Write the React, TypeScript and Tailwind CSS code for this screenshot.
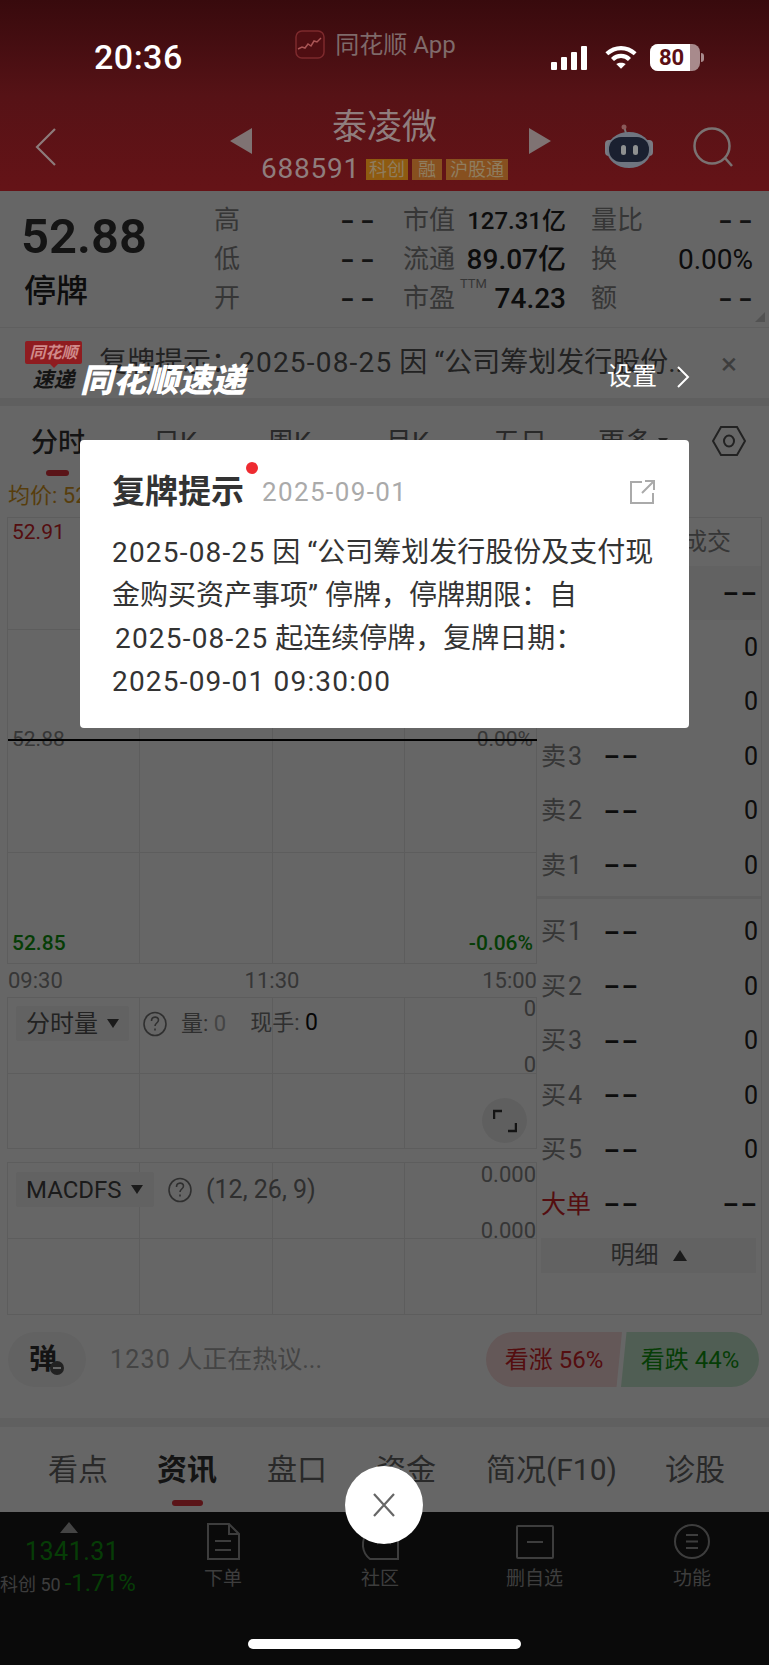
const FONT = { fontFamily: '"Roboto", "Noto Sans CJK SC", sans-serif' };

const Triangle = ({ dir, className }: { dir: "left" | "right"; className?: string }) => (
  <svg width="22" height="26" viewBox="0 0 22 26" className={className}>
    <path d={dir === "left" ? "M22 0V26L0 13Z" : "M0 0V26L22 13Z"} fill="#7f7373" />
  </svg>
);

const Question = () => (
  <svg width="24" height="26" viewBox="0 0 24 26" fill="none" stroke="#777" strokeWidth="1.6">
    <ellipse cx="12" cy="13" rx="11" ry="11.5" />
    <path d="M8.5 10c0-5 7-5 7-1 0 3-3.500 3-3.500 6M12 17.500v2" />
  </svg>
);

const Caret = () => <span className="ml-[9px] h-0 w-0 border-x-[6px] border-t-[9px] border-x-transparent border-t-[#444]" />;

// the app's "--" placeholder is much wider than a plain hyphen
const Dash = ({ className }: { className: string }) => <span className={`inline-block font-bold ${className}`}>--</span>;

// digits in the popup run a bit wider than Roboto
const Num = ({ children }: { children: React.ReactNode }) => <span className="tracking-[1.2px]">{children}</span>;

// chart background, 4 columns and `rows` rows of thin lines
const ChartGrid = ({ rows, className, children }: { rows: number; className: string; children?: React.ReactNode }) => (
  <div className={`relative grid grid-cols-4 border-l border-t border-[#e8e8e8] ${className}`}>
    {Array.from({ length: rows * 4 }).map((_, i) => (
      <div key={i} className="border-b border-r border-[#e8e8e8]" />
    ))}
    {children}
  </div>
);

const InfoCell = ({ label, value, size = "text-[28px]", pr }: { label: React.ReactNode; value?: string; size?: string; pr?: string }) => (
  <div className={`flex h-[39px] items-center justify-between ${pr ?? ""}`}>
    <span className="text-[26px] text-[#888]">{label}</span>
    {value ? (
      <span className={`text-[#222] ${size}`}>{value}</span>
    ) : (
      <Dash className="-mr-[5px] origin-right scale-x-[1.6] text-[24px] tracking-[3px] text-[#333]" />
    )}
  </div>
);

const QuoteRow = ({ label, last = "0", red }: { label: string; last?: string; red?: boolean }) => (
  <div className="flex h-[54.5px] items-center">
    <span className={`w-[62px] ${red ? "text-[25px] text-[#d2232a]" : "text-[25px] tracking-[2px] text-[#888]"}`}>{label}</span>
    <span className="flex-1">
      <Dash className="origin-left scale-x-[1.9] text-[24px] text-[#222]" />
    </span>
    {last === "--" ? <Dash className="origin-right scale-x-[1.9] text-[24px] text-[#222]" /> : <span className="text-[25px] text-[#222]">{last}</span>}
  </div>
);

const BottomItem = ({ icon, label, className }: { icon: React.ReactNode; label: string; className: string }) => (
  <div className={`flex flex-col items-center pt-[10px] ${className}`}>
    <div className="flex h-[39px] items-center">{icon}</div>
    <span className="mt-[3px] whitespace-nowrap text-[19px] leading-[30px] text-[#9a9a9a]">{label}</span>
  </div>
);

const App = () => {
  return (
    <div className="relative h-[1665px] w-[769px] overflow-hidden bg-white" style={FONT}>
      {/* header */}
      <header className="relative h-[191px] bg-gradient-to-b from-[#380a0d] via-[#561216] to-[#651317]">
        <div className="absolute left-[94px] top-[37px] text-[34px] font-medium leading-[40px] tracking-[0.5px] text-white">20:36</div>
        <div className="flex justify-center pr-[18px] pt-[30px]">
          <div className="flex items-center gap-[10px]">
            <svg width="30" height="29" viewBox="0 0 30 29" fill="none">
              <rect x="1" y="1" width="28" height="27" rx="6" fill="#4f0e12" stroke="#7d2a2d" strokeWidth="1.500" />
              <path d="M3 19l4-2 3 1 3-4 3 2 3-5 3 1 4-4" stroke="#a55" strokeWidth="1.500" />
            </svg>
            <span className="text-[24px] leading-[28px] text-[#7f6a6a]">同花顺 App</span>
          </div>
        </div>
        {/* status icons */}
        <div className="absolute left-[551px] top-[44px] flex items-center">
          <svg width="38" height="24" viewBox="0 0 38 24" fill="white">
            <rect x="0" y="16" width="6" height="8" rx="1" />
            <rect x="10" y="11" width="6" height="13" rx="1" />
            <rect x="20" y="6" width="6" height="18" rx="1" />
            <rect x="30" y="0" width="6" height="24" rx="1" />
          </svg>
          <svg className="ml-[15px]" width="34" height="25" viewBox="0 0 36 26" fill="none" stroke="white" strokeWidth="4.500">
            <path d="M3 9c9-8 21-8 30 0" />
            <path d="M9 15c5-5 13-5 18 0" />
            <path d="M18 25l-5-5c3-2 7-2 10 0z" fill="white" stroke="none" />
          </svg>
          <div className="relative ml-[12px] flex h-[27px] w-[50px] items-center overflow-hidden rounded-[8px] bg-[#a88a8c]">
            <div className="absolute inset-y-0 left-0 w-[40px] bg-white" />
            <span className="relative pl-[9px] text-[22px] font-bold leading-[27px] text-[#5b1015]">80</span>
          </div>
          <div className="ml-[1px] h-[9px] w-[3px] rounded-r bg-[#a88a8c]" />
        </div>

        <svg className="absolute left-[34px] top-[127px]" width="24" height="40" viewBox="0 0 24 40" fill="none" stroke="#8d7b7b" strokeWidth="2.200">
          <path d="M21 2L3 20l18 18" />
        </svg>
        <div className="mt-[44px] flex flex-col items-center">
          <div className="text-[35px] leading-[50px] text-[#8f7d7d]">泰凌微</div>
          <div className="relative mt-[2px] flex items-center">
            <Triangle dir="left" className="absolute -left-[31px] -top-[27px]" />
            <Triangle dir="right" className="absolute -right-[43px] -top-[27px]" />
            <span className="text-[28px] leading-[28px] tracking-[0.8px] text-[#8f7d7d]">688591</span>
            <div className="ml-[6px] flex gap-[4px] text-[18px] leading-[21px] text-[#8f7d5f]">
              <span className="bg-[#8e5a10] px-[3px]">科创</span>
              <span className="bg-[#87501f] px-[6px]">融</span>
              <span className="bg-[#87501f] px-[4px]">沪股通</span>
            </div>
          </div>
        </div>
        <svg className="absolute left-[604px] top-[124px]" width="50" height="45" viewBox="0 0 50 45">
          <path d="M22 9c-1-3-2-5-1-6" stroke="#777" strokeWidth="2" fill="none" />
          <circle cx="20" cy="3" r="2.500" fill="#8a5a5a" />
          <rect x="1" y="16" width="48" height="16" rx="4" fill="#7a7a82" />
          <ellipse cx="25" cy="26" rx="22" ry="18" fill="#6f7580" />
          <rect x="5" y="13" width="40" height="25" rx="12" fill="#1a2030" />
          <rect x="17" y="21" width="5" height="10" rx="2.500" fill="#8e9090" />
          <rect x="29" y="21" width="5" height="10" rx="2.500" fill="#8e9090" />
        </svg>
        <svg className="absolute left-[693px] top-[127px]" width="42" height="41" viewBox="0 0 42 41" fill="none" stroke="#7a7272" strokeWidth="2.500">
          <circle cx="19" cy="19" r="17.500" />
          <path d="M32 31l7 8" />
        </svg>
      </header>

      {/* quote summary */}
      <section className="relative flex h-[137px] border-b border-[#eee] pt-[10px]">
        <div className="w-[214px] pl-[21px]">
          <div className="mt-[7px] text-[49px] font-semibold leading-[58px] text-[#333]">52.88</div>
          <div className="ml-[3px] mt-[5px] text-[32px] font-medium leading-[40px] text-[#222]">停牌</div>
        </div>
        <div className="grid h-[117px] w-[540px] grid-cols-[189px_188px_162px]">
          <InfoCell label="高" pr="pr-[28px]" />
          <InfoCell label="市值" value="127.31亿" size="text-[24px] font-medium" pr="pr-[25px]" />
          <InfoCell label="量比" />
          <InfoCell label="低" pr="pr-[28px]" />
          <InfoCell label="流通" value="89.07亿" size="text-[28px] font-medium" pr="pr-[25px]" />
          <InfoCell label="换" value="0.00%" />
          <InfoCell label="开" pr="pr-[28px]" />
          <InfoCell
            label={
              <span className="relative">
                市盈
                <span className="absolute -top-[9px] left-[57px] text-[13px] text-[#888]">TTM</span>
              </span>
            }
            value="74.23"
            size="text-[28px] font-medium"
            pr="pr-[25px]"
          />
          <InfoCell label="额" />
        </div>
        <span className="absolute bottom-[5px] right-[4px] h-0 w-0 border-b-[10px] border-l-[10px] border-b-[#ccc] border-l-transparent" />
      </section>

      {/* notice */}
      <div className="flex h-[70px] items-center pl-[99px]">
        <span className="w-[622px] whitespace-nowrap text-[28px] text-[#555]">
          复牌提示：<Num>2025-08-25</Num> 因 “公司筹划发行股份..
        </span>
        <span className="text-[30px] text-[#999]">×</span>
      </div>
      <div className="h-[8px] bg-[#eee]" />

      {/* period tabs */}
      <nav className="relative flex h-[70px] items-center pt-[4px] text-[27px] text-[#666]">
        <span className="absolute left-[31px] font-medium text-[#333]">分时</span>
        <span className="absolute left-[46px] top-[64px] h-[6px] w-[23px] rounded bg-[#e0333c]" />
        <span className="absolute left-[153px]">日K</span>
        <span className="absolute left-[267px]">周K</span>
        <span className="absolute left-[385px]">月K</span>
        <span className="absolute left-[493px]">五日</span>
        <span className="absolute left-[598px]">更多</span>
        <span className="absolute left-[658px] top-[32px] h-0 w-0 border-x-[5px] border-t-[6px] border-x-transparent border-t-[#555]" />
        <svg className="absolute left-[712px] top-[19px]" width="34" height="32" viewBox="0 0 34 32" fill="none" stroke="#555" strokeWidth="2">
          <path d="M9 2h16l8 14-8 14H9L1 16z" />
          <ellipse cx="17" cy="16" rx="5" ry="5.500" />
        </svg>
      </nav>

      <div className="h-[41px] pl-[8px] pt-[3px] text-[22px] leading-[34px] text-[#d99a1e]">均价: 52.88</div>

      {/* charts and order book */}
      <div className="flex h-[798px] pl-[7px]">
        <div className="w-[530px]">
          <ChartGrid rows={4} className="h-[447px] grid-rows-4">
            <span className="absolute left-[4px] top-[1px] text-[21px] leading-[26px] text-[#d2232a]">52.91</span>
            <span className="absolute left-[4px] top-[208px] text-[21px] leading-[26px] text-[#888]">52.88</span>
            <span className="absolute right-[4px] top-[208px] text-[21px] leading-[26px] text-[#888]">0.00%</span>
            <span className="absolute inset-x-0 top-[221px] h-[2px] bg-black" />
            <span className="absolute left-[4px] top-[412px] text-[21px] font-medium leading-[26px] text-[#119911]">52.85</span>
            <span className="absolute right-[4px] top-[412px] text-[21px] font-medium leading-[26px] text-[#119911]">-0.06%</span>
          </ChartGrid>
          <div className="flex h-[33px] items-center justify-between pl-[1px] text-[22px] text-[#888]">
            <span>09:30</span>
            <span className="pr-[1px]">11:30</span>
            <span>15:00</span>
          </div>
          <ChartGrid rows={2} className="h-[152px] grid-rows-2">
            <div className="absolute left-[8px] top-[8px] flex items-center">
              <div className="flex h-[35px] w-[113px] items-center rounded-[2px] bg-[#f5f5f5] pl-[10px] text-[24px] text-[#555]">
                分时量
                <Caret />
              </div>
              <div className="ml-[14px]">
                <Question />
              </div>
              <span className="ml-[14px] text-[22px] text-[#777]">
                量: <span className="text-[#aaa]">0</span>
              </span>
              <span className="ml-[24px] text-[22px] text-[#777]">
                现手: <span className="text-[23px] text-[#111]">0</span>
              </span>
            </div>
            <span className="absolute right-[1px] top-[-2px] text-[22px] leading-[26px] text-[#888]">0</span>
            <span className="absolute right-[1px] top-[54px] text-[22px] leading-[26px] text-[#888]">0</span>
            <div className="absolute left-[474px] top-[100px] flex h-[45px] w-[45px] items-center justify-center rounded-full bg-[#eee]">
              <svg width="24" height="24" viewBox="0 0 24 24" fill="none" stroke="#333" strokeWidth="2.500">
                <path d="M1 10V2h8M23 14v8h-8" />
              </svg>
            </div>
          </ChartGrid>
          <ChartGrid rows={2} className="mt-[13px] h-[153px] grid-rows-2">
            <div className="absolute left-[8px] top-[8px] flex items-center">
              <div className="flex h-[35px] w-[138px] items-center rounded-[2px] bg-[#f5f5f5] pl-[10px] text-[24px] text-[#444]">
                MACDFS
                <Caret />
              </div>
              <div className="ml-[14px]">
                <Question />
              </div>
              <span className="ml-[14px] text-[25px] text-[#777]">(12, 26, 9)</span>
            </div>
            <span className="absolute right-[1px] top-[-1px] text-[22px] leading-[26px] text-[#888]">0.000</span>
            <span className="absolute right-[1px] top-[55px] text-[22px] leading-[26px] text-[#888]">0.000</span>
          </ChartGrid>
        </div>

        <div className="w-[225px] border-b border-r border-t border-[#e8e8e8] pl-[4px] pr-[3px]">
          <div className="flex h-[48px] items-center justify-end pr-[27px] text-[24px] text-[#888]">成交</div>
          <div className="-ml-[4px] -mr-[3px] flex h-[54px] items-center justify-end bg-[#f5f5f5] pr-[3px] text-[#222]">
            <Dash className="origin-right scale-x-[1.9] text-[24px]" />
          </div>
          <QuoteRow label="卖5" />
          <QuoteRow label="卖4" />
          <QuoteRow label="卖3" />
          <QuoteRow label="卖2" />
          <QuoteRow label="卖1" />
          <div className="-ml-[4px] -mr-[3px] mb-[6px] mt-[3px] h-[3px] bg-[#eee]" />
          <QuoteRow label="买1" />
          <QuoteRow label="买2" />
          <QuoteRow label="买3" />
          <QuoteRow label="买4" />
          <QuoteRow label="买5" />
          <QuoteRow label="大单" last="--" red />
          <div className="mr-[2px] mt-[6px] flex h-[35px] items-center justify-center gap-[14px] bg-[#f5f5f5] text-[24px] text-[#666]">
            明细
            <span className="h-0 w-0 border-x-[7px] border-b-[11px] border-x-transparent border-b-[#444]" />
          </div>
        </div>
      </div>

      {/* comment bar */}
      <div className="flex h-[103px] items-start pl-[8px] pt-[17px]">
        <div className="relative flex h-[55px] w-[78px] items-center justify-center rounded-full bg-[#f5f5f5] text-[28px] font-bold text-[#333]">
          <span className="-ml-[8px]">弹</span>
          <span className="absolute left-[42px] top-[29px] flex h-[14px] w-[14px] items-center justify-center rounded-full bg-[#555]">
            <span className="h-[2px] w-[8px] bg-white" />
          </span>
        </div>
        <span className="ml-[24px] w-[376px] text-[25px] leading-[55px] text-[#aaa]">
          <Num>1230</Num> 人正在热议...
        </span>
        <div className="flex h-[55px] w-[136px] items-center justify-center rounded-l-[28px] bg-[#fbdcdc] text-[24px] text-[#d2232a] [clip-path:polygon(0_0,100%_0,96%_100%,0_100%)]">看涨 56%</div>
        <div className="-ml-[1px] flex h-[55px] w-[138px] items-center justify-center rounded-r-[28px] bg-[#c9ecd2] text-[24px] text-[#119911] [clip-path:polygon(4%_0,100%_0,100%_100%,0_100%)]">看跌 44%</div>
      </div>
      <div className="h-[9px] bg-[#f0f0f0]" />

      {/* info tabs */}
      <nav className="relative flex h-[85px] items-center text-[30px] text-[#666]">
        <span className="absolute left-[48px]">看点</span>
        <span className="absolute left-[157px] font-bold text-[#333]">资讯</span>
        <span className="absolute left-[172px] top-[73px] h-[6px] w-[31px] rounded bg-[#e0333c]" />
        <span className="absolute left-[267px]">盘口</span>
        <span className="absolute left-[376px]">资金</span>
        <span className="absolute left-[486px]">简况(F10)</span>
        <span className="absolute left-[665px]">诊股</span>
      </nav>

      {/* bottom bar */}
      <footer className="flex h-[153px] items-start bg-[#1a1a1a]">
        <div className="relative w-[170px]">
          <div className="absolute left-[60px] top-[10px] h-0 w-0 border-x-[9px] border-b-[11px] border-x-transparent border-b-[#aaa]" />
          <div className="absolute left-[25px] top-[23px] text-[25px] leading-[34px] tracking-[0.5px] text-[#119911]">1341.31</div>
          <div className="absolute left-0 top-[57px] flex w-[170px] items-baseline whitespace-nowrap">
            <span className="text-[18px] leading-[28px] text-[#999]">科创 50</span>
            <span className="ml-[4px] text-[24px] leading-[28px] text-[#119911]">-1.71%</span>
          </div>
        </div>
        <BottomItem
          className="ml-[34px] w-[38px]"
          label="下单"
          icon={
            <svg width="34" height="37" viewBox="0 0 34 37" fill="none" stroke="#9a9a9a" strokeWidth="2">
              <path d="M2 1h21l10 10v25H2zM23 1v10h10M9 18h16M9 27h16" />
            </svg>
          }
        />
        <BottomItem
          className="ml-[119px] w-[38px]"
          label="社区"
          icon={
            <svg width="40" height="37" viewBox="0 0 40 37" fill="none" stroke="#9a9a9a" strokeWidth="2">
              <path d="M8 8c-8 10-6 22 2 28h28V10M18 8v12l6-3 6 3V8" />
            </svg>
          }
        />
        <BottomItem
          className="ml-[107px] w-[57px]"
          label="删自选"
          icon={
            <svg width="38" height="34" viewBox="0 0 38 34" fill="none" stroke="#9a9a9a" strokeWidth="2">
              <rect x="1" y="1" width="36" height="32" rx="1" />
              <path d="M11 17h16" />
            </svg>
          }
        />
        <BottomItem
          className="ml-[110px] w-[38px]"
          label="功能"
          icon={
            <svg width="36" height="35" viewBox="0 0 36 35" fill="none" stroke="#9a9a9a" strokeWidth="2">
              <ellipse cx="18" cy="17.500" rx="17" ry="16.500" />
              <path d="M12 11h12M12 17.500h12M12 24h12" />
            </svg>
          }
        />
      </footer>

      {/* dim layer with the popup */}
      <div className="absolute inset-x-0 bottom-0 top-[191px] flex flex-col bg-black/60 pt-[148px]">
        <div className="relative flex h-[54px] items-center pl-[25px] pr-[79px]">
          <div className="flex w-[57px] flex-col items-center">
            <span className="relative flex h-[23px] w-[57px] items-center justify-center rounded-[2px] bg-[#8f1c20] text-[16px] font-bold italic leading-[23px] text-[#d08a8a]">
              同花顺
              <span className="absolute -bottom-[4px] left-[25px] h-0 w-0 border-x-[4px] border-t-[4px] border-x-transparent border-t-[#8f1c20]" />
            </span>
            <span className="mt-[5px] text-[21px] font-bold italic leading-[22px] text-[#141414]">速递</span>
          </div>
          <span className="-ml-[2px] flex-1 pt-[30px] text-[33px] font-black italic leading-[40px] text-white">同花顺速递</span>
          <span className="pt-[22px] text-[25px] leading-[30px] text-white">设置</span>
          <svg className="ml-[20px] mt-[22px]" width="13" height="22" viewBox="0 0 13 22" fill="none" stroke="white" strokeWidth="2">
            <path d="M1 1l10 10L1 21" />
          </svg>
        </div>

        <article className="relative z-10 ml-[80px] mt-[47px] h-[288px] w-[609px] rounded-[4px] bg-white px-[32px] pt-[30px]">
          <span className="absolute left-[166px] top-[22px] h-[12px] w-[12px] rounded-full bg-[#ee2a30]" />
          <div className="flex items-center">
            <h2 className="text-[33px] font-bold leading-[44px] text-[#333]">复牌提示</h2>
            <span className="ml-[18px] text-[26px] tracking-[1.4px] text-[#aaa]">2025-09-01</span>
            <svg className="ml-auto mr-[2px]" width="26" height="25" viewBox="0 0 26 25" fill="none" stroke="#aaa" strokeWidth="2">
              <path d="M13 2H2v21h22V13M16 1h9v9M25 1L13 13" />
            </svg>
          </div>
          <p className="mt-[17px] text-[28px] leading-[43px] text-[#333]">
            <Num>2025-08-25</Num> 因 “公司筹划发行股份及支付现
            <br />
            金购买资产事项” 停牌，停牌期限：自
            <br />
            <span className="pl-[3px]">
              <Num>2025-08-25</Num> 起连续停牌，复牌日期：
            </span>
            <br />
            <Num>2025-09-01 09:30:00</Num>
          </p>
        </article>

        <button className="relative z-10 ml-[345px] mt-[738px] flex h-[78px] w-[78px] items-center justify-center rounded-full bg-white">
          <svg width="24" height="24" viewBox="0 0 24 24" fill="none" stroke="#666" strokeWidth="2.200">
            <path d="M2 1l20 22M22 1L2 23" />
          </svg>
        </button>
      </div>

      <div className="absolute bottom-[16px] left-[248px] h-[10px] w-[273px] rounded-full bg-white" />
    </div>
  );
};

export default App;
